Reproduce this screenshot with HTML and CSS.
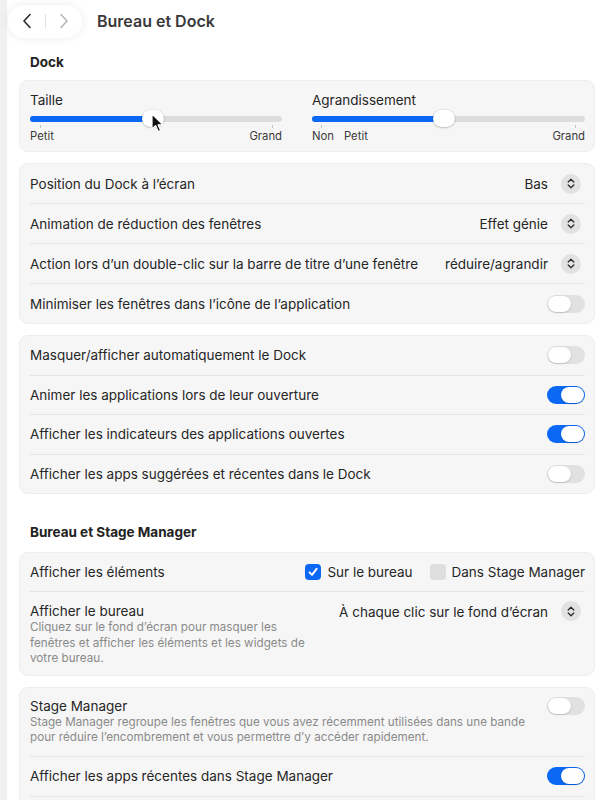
FILE: index.html
```html
<!DOCTYPE html>
<html lang="fr">
<head>
<meta charset="utf-8">
<title>Bureau et Dock</title>
<link rel="stylesheet" href="styles.css">
</head>
<body>
<div class="header">
  <div class="nav">
    <svg class="chev" width="10" height="16" viewBox="0 0 10 16"><path d="M8 1.5 L2 8 L8 14.5" fill="none" stroke="#2a2a2a" stroke-width="1.6" stroke-linecap="round" stroke-linejoin="round"/></svg>
    <span class="nav-sep"></span>
    <svg class="chev" width="10" height="16" viewBox="0 0 10 16"><path d="M2 1.5 L8 8 L2 14.5" fill="none" stroke="#b5b5b5" stroke-width="1.6" stroke-linecap="round" stroke-linejoin="round"/></svg>
  </div>
  <div class="title">Bureau et Dock</div>
</div>

<div class="content">
  <div class="section-title first">Dock</div>
  <div class="group sliders">
    <div class="slider-col left">
      <div class="slider-label">Taille</div>
      <div class="slider">
        <div class="track"><div class="fill" style="width:123px"></div></div>
        <div class="knob" style="left:112px"></div>
        <span class="tick" style="left:10px"></span>
        <span class="tick" style="left:242px"></span>
      </div>
      <div class="slider-scale"><span>Petit</span><span>Grand</span></div>
    </div>
    <div class="slider-col right">
      <div class="slider-label">Agrandissement</div>
      <div class="slider">
        <div class="track"><div class="fill" style="width:132px"></div></div>
        <div class="knob" style="left:121px"></div>
        <span class="tick" style="left:9px"></span>
        <span class="tick" style="left:263px"></span>
      </div>
      <div class="slider-scale"><span class="scale-left"><span>Non</span><span>Petit</span></span><span>Grand</span></div>
    </div>
  </div>

  <div class="group">
    <div class="row">
      <span>Position du Dock à l’écran</span>
      <span class="popup">Bas <span class="updown"><svg width="8" height="11" viewBox="0 0 8 11"><path d="M1.2 4 L4 1.3 L6.8 4 M1.2 7 L4 9.7 L6.8 7" fill="none" stroke="#2a2a2a" stroke-width="1.3" stroke-linecap="round" stroke-linejoin="round"/></svg></span></span>
    </div>
    <div class="row">
      <span>Animation de réduction des fenêtres</span>
      <span class="popup">Effet génie <span class="updown"><svg width="8" height="11" viewBox="0 0 8 11"><path d="M1.2 4 L4 1.3 L6.8 4 M1.2 7 L4 9.7 L6.8 7" fill="none" stroke="#2a2a2a" stroke-width="1.3" stroke-linecap="round" stroke-linejoin="round"/></svg></span></span>
    </div>
    <div class="row">
      <span>Action lors d’un double-clic sur la barre de titre d’une fenêtre</span>
      <span class="popup">réduire/agrandir <span class="updown"><svg width="8" height="11" viewBox="0 0 8 11"><path d="M1.2 4 L4 1.3 L6.8 4 M1.2 7 L4 9.7 L6.8 7" fill="none" stroke="#2a2a2a" stroke-width="1.3" stroke-linecap="round" stroke-linejoin="round"/></svg></span></span>
    </div>
    <div class="row">
      <span>Minimiser les fenêtres dans l’icône de l’application</span>
      <span class="toggle"></span>
    </div>
  </div>

  <div class="group compact">
    <div class="row">
      <span>Masquer/afficher automatiquement le Dock</span>
      <span class="toggle"></span>
    </div>
    <div class="row">
      <span>Animer les applications lors de leur ouverture</span>
      <span class="toggle on"></span>
    </div>
    <div class="row">
      <span>Afficher les indicateurs des applications ouvertes</span>
      <span class="toggle on"></span>
    </div>
    <div class="row">
      <span>Afficher les apps suggérées et récentes dans le Dock</span>
      <span class="toggle"></span>
    </div>
  </div>

  <div class="section-title">Bureau et Stage Manager</div>
  <div class="group">
    <div class="row short">
      <span>Afficher les éléments</span>
      <span class="checks">
        <span class="check-item"><span class="checkbox checked"><svg width="12" height="12" viewBox="0 0 12 12"><path d="M2.5 6.3 L5 8.8 L9.6 2.8" fill="none" stroke="#fff" stroke-width="1.9" stroke-linecap="round" stroke-linejoin="round"/></svg></span>Sur le bureau</span>
        <span class="check-item"><span class="checkbox"></span>Dans Stage Manager</span>
      </span>
    </div>
    <div class="row tall">
      <div class="text-col">
        <div>Afficher le bureau</div>
        <div class="desc">Cliquez sur le fond d’écran pour masquer les<br>fenêtres et afficher les éléments et les widgets de<br>votre bureau.</div>
      </div>
      <span class="popup">À chaque clic sur le fond d’écran <span class="updown"><svg width="8" height="11" viewBox="0 0 8 11"><path d="M1.2 4 L4 1.3 L6.8 4 M1.2 7 L4 9.7 L6.8 7" fill="none" stroke="#2a2a2a" stroke-width="1.3" stroke-linecap="round" stroke-linejoin="round"/></svg></span></span>
    </div>
  </div>

  <div class="group open-end">
    <div class="row tall">
      <div class="text-col">
        <div>Stage Manager</div>
        <div class="desc">Stage Manager regroupe les fenêtres que vous avez récemment utilisées dans une bande<br>pour réduire l’encombrement et vous permettre d’y accéder rapidement.</div>
      </div>
      <span class="toggle"></span>
    </div>
    <div class="row keep-line">
      <span>Afficher les apps récentes dans Stage Manager</span>
      <span class="toggle on"></span>
    </div>
  </div>
</div>

<svg class="cursor" width="14" height="21" viewBox="0 0 14 21"><path d="M1 1 L1 16 L4.6 12.6 L7.2 18.6 L9.6 17.6 L7.1 11.8 L12 11.8 Z" fill="#111" stroke="#fff" stroke-width="1.2" stroke-linejoin="round"/></svg>
</body>
</html>
```

FILE: styles.css
```css
html, body {
  margin: 0;
  padding: 0;
}
body {
  width: 598px;
  height: 800px;
  overflow: hidden;
  position: relative;
  background: linear-gradient(to right, #f1f1f1 0, #f1f1f1 7px, #ffffff 7px);
  font-family: Inter, "Liberation Sans", sans-serif;
  font-size: 13.5px;
  color: #262626;
}

.header {
  display: flex;
  align-items: center;
  height: 42px;
  padding-left: 8px;
}
.nav {
  width: 74px;
  height: 33px;
  border-radius: 17px;
  background: #fff;
  box-shadow: 0 0 10px rgba(0, 0, 0, 0.08);
  display: flex;
  align-items: center;
  justify-content: center;
  gap: 13px;
}
.nav-sep {
  width: 1px;
  height: 15px;
  background: #e4e4e4;
}
.title {
  margin-left: 15px;
  font-size: 16px;
  font-weight: 600;
  color: #3a3a3a;
}

.content {
  padding: 0 3px 0 19px;
}
.section-title {
  font-weight: 700;
  font-size: 13.5px;
  line-height: 16px;
  padding-left: 11px;
  margin: 30px 0 12px;
  color: #222;
}
.section-title.first {
  margin: 12px 0 10px;
}

.group {
  background: #f6f6f6;
  border: 1px solid #ededed;
  border-radius: 9px;
  padding: 0 9px 0 10px;
  margin-bottom: 11px;
}
.group.open-end {
  padding-bottom: 20px;
}

.sliders {
  display: flex;
  gap: 30px;
  padding-top: 11px;
  padding-bottom: 8px;
}
.slider-col.left {
  width: 252px;
  flex-shrink: 0;
}
.slider-col.right {
  flex: 1;
}
.slider-label {
  line-height: 16px;
}
.slider {
  position: relative;
  height: 21px;
}
.track {
  position: absolute;
  left: 0;
  right: 0;
  top: 8px;
  height: 6px;
  border-radius: 3px;
  background: #dddddd;
  overflow: hidden;
}
.fill {
  height: 100%;
  background: #0a68f5;
}
.knob {
  position: absolute;
  top: 2px;
  width: 22px;
  height: 17px;
  border-radius: 9px;
  background: #fff;
  box-shadow: 0 0.5px 2px rgba(0, 0, 0, 0.35);
}
.tick {
  position: absolute;
  top: 17px;
  width: 1px;
  height: 3px;
  background: #c2c2c2;
}
.slider-scale {
  display: flex;
  justify-content: space-between;
  font-size: 11.3px;
  line-height: 14px;
  color: #3a3a3a;
}
.scale-left {
  display: flex;
  gap: 10px;
}

.row {
  display: flex;
  align-items: center;
  justify-content: space-between;
  min-height: 39px;
  border-bottom: 1px solid #e4e4e4;
}
.row:last-child {
  border-bottom: none;
}
.row.keep-line {
  border-bottom: 1px solid #e4e4e4;
}
.compact .row {
  min-height: 38.5px;
}
.row.short {
  min-height: 38px;
}
.row.tall {
  align-items: flex-start;
  padding-top: 11px;
  padding-bottom: 8px;
  min-height: 0;
}
.open-end .row.tall {
  padding-top: 10px;
  padding-bottom: 10px;
}
.text-col {
  line-height: 16px;
}
.desc {
  margin-top: 1px;
  font-size: 11.7px;
  line-height: 15.5px;
  color: #8a8a8a;
}

.popup {
  display: flex;
  align-items: center;
  gap: 13px;
  margin-right: 4px;
  line-height: 16px;
}
.updown {
  width: 20px;
  height: 20px;
  border-radius: 50%;
  background: #e2e2e2;
  display: flex;
  align-items: center;
  justify-content: center;
}
.row.tall .popup .updown {
  margin-top: -2px;
}

.toggle {
  position: relative;
  width: 38px;
  height: 18px;
  border-radius: 9px;
  background: #e1e1e1;
  flex-shrink: 0;
}
.toggle::after {
  content: "";
  position: absolute;
  left: 1px;
  top: 1px;
  width: 23px;
  height: 16px;
  border-radius: 8px;
  background: #fff;
  box-shadow: 0 0.5px 1.5px rgba(0, 0, 0, 0.25);
}
.toggle.on {
  background: #0a68f5;
}
.toggle.on::after {
  left: 14px;
}
.row.tall .toggle {
  margin-top: -1px;
}

.checks {
  display: flex;
  align-items: center;
  gap: 17px;
}
.check-item {
  display: flex;
  align-items: center;
  gap: 6px;
}
.checkbox {
  width: 16px;
  height: 16px;
  border-radius: 4px;
  background: #dedede;
  display: flex;
  align-items: center;
  justify-content: center;
}
.checkbox.checked {
  background: #0a68f5;
}

.cursor {
  position: absolute;
  left: 151px;
  top: 113px;
}
```
